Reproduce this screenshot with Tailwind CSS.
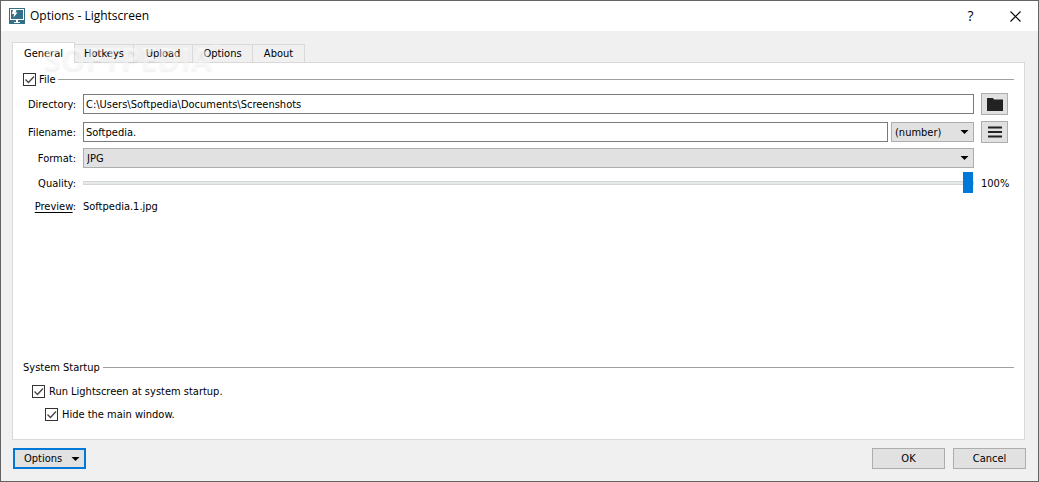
<!DOCTYPE html>
<html lang="en">
<head>
    <meta charset="UTF-8">
    <meta name="viewport" content="width=device-width, initial-scale=1.0">
    <title>Options - Lightscreen</title>
    <script src="https://cdn.jsdelivr.net/npm/@tailwindcss/browser@4"></script>
</head>
<body class="bg-[#f0f0f0] font-['DejaVu_Sans_Condensed','DejaVu_Sans',sans-serif] text-[11px] leading-[17px] text-black">
    <div class="flex min-h-screen flex-col border border-[#646464]">
        <!-- Title bar -->
        <header class="flex h-[30px] items-center bg-white pl-2">
            <svg class="size-4 shrink-0" viewBox="0 0 16 16" aria-hidden="true">
                <path fill="#336f87" d="M0 0h16v16H0z"/>
                <path fill="#fff" d="M1 1h14v11H9v2h2v1H5v-1h2v-2H1z"/>
                <path fill="#336f87" d="M2 2h12v9H2z"/>
                <path fill="#fff" d="M4 2h3.500L6.500 4.500H8.500L4.500 9.500l.5-3.500H2.800z"/>
            </svg>
            <h1 class="ml-[5px] flex-1 font-['Open_Sans',sans-serif] text-xs">Options - Lightscreen</h1>
            <button type="button" class="flex h-full w-[45px] items-center justify-center font-['Open_Sans',sans-serif] text-sm" aria-label="Help">?</button>
            <button type="button" class="flex h-full w-[45px] items-center justify-center" aria-label="Close">
                <svg class="size-[11px]" viewBox="0 0 11 11" fill="none" stroke="#000" stroke-width="1.1"><path d="M.5.5l10 10M10.5.5l-10 10"/></svg>
            </button>
        </header>

        <main class="flex flex-1 flex-col pt-[11px] pr-[13px] pb-3 pl-[11px]">
            <!-- Tabs -->
            <div class="relative flex items-end" role="tablist">
                <button type="button" role="tab" aria-selected="true" class="z-10 -mb-px h-[21px] w-[63px] border border-b-0 border-[#d9d9d9] bg-white text-center">General</button>
                <button type="button" role="tab" class="h-[18px] w-[59px] border-t border-r border-[#d9d9d9] text-center">Hotkeys</button>
                <button type="button" role="tab" class="h-[18px] w-[59px] border-t border-r border-[#d9d9d9] text-center">Upload</button>
                <button type="button" role="tab" class="h-[18px] w-[60px] border-t border-r border-[#d9d9d9] text-center">Options</button>
                <button type="button" role="tab" class="h-[18px] w-[52px] border-t border-r border-[#d9d9d9] text-center">About</button>
                <!-- Watermark -->
                <div class="pointer-events-none absolute top-0 left-8 z-20 flex items-start font-['Open_Sans',sans-serif] text-white/50 [text-shadow:0_2px_2px_rgb(0_0_0/0.06)]" aria-hidden="true">
                    <span class="text-[31px] leading-8 font-bold">SOFTPEDIA</span><span class="text-[9px] leading-3">®</span>
                </div>
            </div>

            <section class="flex flex-1 flex-col border border-[#d9d9d9] bg-white px-[10px] pt-2 pb-4" role="tabpanel">
                <div class="flex items-center gap-[3px]">
                    <span class="grid size-[13px] shrink-0">
                        <input id="file" type="checkbox" checked class="peer col-start-1 row-start-1 size-[13px] appearance-none border border-[#333] bg-white">
                        <svg class="pointer-events-none invisible col-start-1 row-start-1 size-[13px] peer-checked:visible" viewBox="0 0 13 13" fill="none" stroke="#444" stroke-width="1.3"><path d="M2.5 6.5l3 3 5.5-6"/></svg>
                    </span>
                    <label for="file">File</label>
                    <div class="h-px flex-1 bg-[#a0a0a0]"></div>
                </div>

                <div class="mt-1 mr-[6px] grid grid-cols-[53px_1fr_27px] items-center gap-x-[7px] gap-y-1">
                    <label for="directory" class="text-right">Directory:</label>
                    <input id="directory" type="text" value="C:\Users\Softpedia\Documents\Screenshots" class="h-5 w-full min-w-0 border border-[#7a7a7a] px-[2px] pt-px">
                    <button type="button" class="my-px flex h-[22px] items-center justify-center border border-[#adadad] bg-[#e1e1e1]" aria-label="Browse">
                        <svg class="h-[13px] w-4" viewBox="0 0 16 13"><path fill="#222" d="M0 0h6l1 1.5h9V13H0z"/></svg>
                    </button>

                    <label for="filename" class="text-right">Filename:</label>
                    <div class="flex gap-[3px]">
                        <input id="filename" type="text" value="Softpedia." class="h-5 min-w-0 flex-1 border border-[#7a7a7a] px-[2px] pt-px">
                        <div class="grid w-[83px] items-center">
                            <select aria-label="Naming" class="col-start-1 row-start-1 h-5 w-full appearance-none border border-[#adadad] bg-[#e1e1e1] px-[3px] pt-px">
                                <option>(number)</option>
                            </select>
                            <svg class="pointer-events-none col-start-1 row-start-1 mr-[5px] h-1 w-[9px] justify-self-end" viewBox="0 0 9 4"><path d="M.5 0h8l-4 4z"/></svg>
                        </div>
                    </div>
                    <button type="button" class="my-px flex h-[22px] items-center justify-center border border-[#adadad] bg-[#e1e1e1]" aria-label="Naming options">
                        <svg class="h-3 w-[14px]" viewBox="0 0 14 12"><path fill="#222" d="M0 .5h14v2H0zM0 5h14v2H0zM0 9.500h14v2H0z"/></svg>
                    </button>

                    <label for="format" class="text-right">Format:</label>
                    <div class="grid items-center">
                        <select id="format" class="col-start-1 row-start-1 h-5 w-full appearance-none border border-[#adadad] bg-[#e1e1e1] px-[3px] pt-px">
                            <option>JPG</option>
                        </select>
                        <svg class="pointer-events-none col-start-1 row-start-1 mr-[5px] h-1 w-[9px] justify-self-end" viewBox="0 0 9 4"><path d="M.5 0h8l-4 4z"/></svg>
                    </div>
                    <span></span>

                    <label for="quality" class="text-right">Quality:</label>
                    <input id="quality" type="range" min="0" max="100" value="100" class="h-[22px] w-full appearance-none bg-transparent [&::-webkit-slider-runnable-track]:h-1 [&::-webkit-slider-runnable-track]:border [&::-webkit-slider-runnable-track]:border-[#d6d6d6] [&::-webkit-slider-runnable-track]:bg-[#e7eaea] [&::-webkit-slider-thumb]:-mt-[10px] [&::-webkit-slider-thumb]:h-[21px] [&::-webkit-slider-thumb]:w-[10px] [&::-webkit-slider-thumb]:appearance-none [&::-webkit-slider-thumb]:bg-[#0078d7]">
                    <output for="quality">100%</output>

                    <span class="text-right"><a href="#preview" class="underline underline-offset-2">Preview</a>:</span>
                    <span id="preview">Softpedia.1.jpg</span>
                </div>

                <!-- System startup -->
                <div class="mt-auto flex items-center gap-[3px]">
                    <h2>System Startup</h2>
                    <div class="h-px flex-1 bg-[#a0a0a0]"></div>
                </div>
                <div class="mt-[7px] ml-[9px] flex items-center gap-1">
                    <span class="grid size-[13px] shrink-0">
                        <input id="startup" type="checkbox" checked class="peer col-start-1 row-start-1 size-[13px] appearance-none border border-[#333] bg-white">
                        <svg class="pointer-events-none invisible col-start-1 row-start-1 size-[13px] peer-checked:visible" viewBox="0 0 13 13" fill="none" stroke="#444" stroke-width="1.3"><path d="M2.5 6.500l3 3 5.500-6"/></svg>
                    </span>
                    <label for="startup">Run Lightscreen at system startup.</label>
                </div>
                <div class="mt-[6px] ml-[22px] flex items-center gap-1">
                    <span class="grid size-[13px] shrink-0">
                        <input id="hide" type="checkbox" checked class="peer col-start-1 row-start-1 size-[13px] appearance-none border border-[#333] bg-white">
                        <svg class="pointer-events-none invisible col-start-1 row-start-1 size-[13px] peer-checked:visible" viewBox="0 0 13 13" fill="none" stroke="#444" stroke-width="1.3"><path d="M2.5 6.500l3 3 5.500-6"/></svg>
                    </span>
                    <label for="hide">Hide the main window.</label>
                </div>
            </section>

            <!-- Dialog buttons -->
            <footer class="mt-2 -mr-px ml-px flex gap-2">
                <button type="button" class="mr-auto flex h-[21px] w-[73px] items-center justify-between border-2 border-[#0078d7] bg-[#e1e1e1] pr-1 pl-[9px]">
                    Options
                    <svg class="h-1 w-[9px]" viewBox="0 0 9 4"><path d="M.5 0h8l-4 4z"/></svg>
                </button>
                <button type="button" class="h-[21px] w-[73px] border border-[#adadad] bg-[#e1e1e1]">OK</button>
                <button type="button" class="h-[21px] w-[73px] border border-[#adadad] bg-[#e1e1e1]">Cancel</button>
            </footer>
        </main>
    </div>
</body>
</html>
